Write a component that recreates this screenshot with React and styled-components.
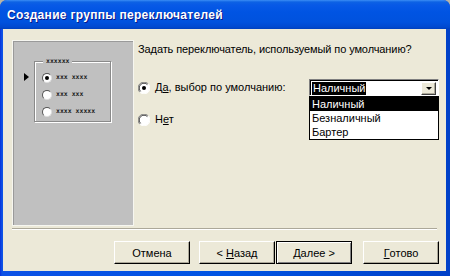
import React from "react";
import styled, { createGlobalStyle } from "styled-components";

const GlobalStyle = createGlobalStyle`
  html, body {
    margin: 0;
    padding: 0;
    background: #b8b4a6;
  }
  body {
    font-family: "Liberation Sans", Arial, sans-serif;
    font-size: 11px;
    color: #000;
  }
`;

const Window = styled.div`
  width: 450px;
  height: 276px;
  display: flex;
  flex-direction: column;
  overflow: hidden;
  border-radius: 7px 7px 0 0;
  background: #0842d6;
`;

const TitleBar = styled.div`
  height: 29px;
  flex: 0 0 29px;
  display: flex;
  align-items: center;
  padding-left: 7px;
  background: linear-gradient(
    to bottom,
    #3b8df5 0px,
    #0d62e4 2px,
    #0859e6 5px,
    #0054e3 12px,
    #0052de 22px,
    #0049d0 27px,
    #0040bd 29px
  );
  color: #fff;
  font-family: "Liberation Sans", Arial, sans-serif;
  font-weight: bold;
  font-size: 12px;
  letter-spacing: 0.3px;
  text-shadow: 1px 1px 0 #0a1a8a;
`;

const Frame = styled.div`
  flex: 1;
  display: flex;
  padding: 0 4px 5px 3px;
  background: linear-gradient(to right, #0831d9, #0d52e6 2px, #0054e3 50%, #0040c8);
`;

const Body = styled.div`
  flex: 1;
  display: flex;
  flex-direction: column;
  background: #ece9d8;
  padding: 11px 7px 0 9px;
`;

const Main = styled.div`
  display: flex;
  gap: 4px;
`;

const Preview = styled.div`
  width: 122px;
  height: 186px;
  box-sizing: border-box;
  background: #c0c0c0;
  border: 1px solid #f6f6f0;
  box-shadow: inset 1px 1px 0 #9a9a9a;
  display: flex;
  padding: 20px 0 0 11px;
`;

const Pointer = styled.div`
  width: 0;
  height: 0;
  margin-top: 12px;
  margin-right: 5px;
  border-top: 4px solid transparent;
  border-bottom: 4px solid transparent;
  border-left: 5px solid #000;
`;

const GroupBox = styled.div`
  position: relative;
  width: 77px;
  height: 61px;
  border: 1px solid #8a8a8a;
  box-shadow: 1px 1px 0 #fff, inset 1px 1px 0 #fff;
  padding: 11px 0 0 7px;
  box-sizing: border-box;
  display: flex;
  flex-direction: column;
  gap: 8px;
`;

const Dots = styled.span`
  font-family: "DejaVu Sans Mono", monospace;
  font-weight: bold;
  font-size: 6.5px;
  line-height: 9px;
  color: #202020;
  letter-spacing: 0;
`;

const GroupLegend = styled(Dots)`
  position: absolute;
  top: -5px;
  left: 8px;
  padding: 0 3px;
  background: #c0c0c0;
`;

const MiniRow = styled.div`
  display: flex;
  align-items: center;
  gap: 4px;
  height: 9px;
`;

const MiniDot = styled.span`
  width: 8px;
  height: 8px;
  border-radius: 50%;
  background: #fff;
  border: 1px solid #555;
  border-right-color: #ddd;
  border-bottom-color: #ddd;
  display: flex;
  align-items: center;
  justify-content: center;
  &::after {
    content: "";
    width: 4px;
    height: 4px;
    border-radius: 50%;
    background: ${(p) => (p.$on ? "#000" : "transparent")};
  }
`;

const Options = styled.div`
  flex: 1;
  display: flex;
  flex-direction: column;
`;

const Question = styled.div`
  margin-top: 3px;
  line-height: 13px;
  letter-spacing: -0.1px;
`;

const ChoiceRow = styled.div`
  display: flex;
  align-items: center;
  margin-top: ${(p) => p.$top}px;
  height: ${(p) => p.$h}px;
`;

const Label = styled.span`
  margin-left: 5px;
  width: ${(p) => (p.$w ? `${p.$w}px` : "auto")};
  line-height: 13px;
`;

const Key = styled.span`
  text-decoration: underline;
  text-underline-offset: 1px;
`;

const Combo = styled.div`
  position: relative;
  width: 130px;
  height: 17px;
  box-sizing: border-box;
  background: #fff;
  border: 1px solid #7f7f7f;
  border-right-color: #fff;
  border-bottom-color: #fff;
  box-shadow: inset 1px 1px 0 #000;
  display: flex;
  align-items: center;
  padding: 0 2px 0 2px;
`;

const ComboValue = styled.span`
  background: #000;
  color: #fff;
  line-height: 13px;
  padding: 0 1px;
  margin-top: 1px;
`;

const ComboButton = styled.span`
  margin-left: auto;
  width: 15px;
  height: 13px;
  margin-top: 1px;
  box-sizing: border-box;
  background: #ece9d8;
  border: 1px solid #fff;
  border-right-color: #404040;
  border-bottom-color: #404040;
  box-shadow: inset -1px -1px 0 #aca899;
  display: flex;
  align-items: center;
  justify-content: center;
  &::after {
    content: "";
    border-left: 3px solid transparent;
    border-right: 3px solid transparent;
    border-top: 3px solid #000;
  }
`;

const DropList = styled.ul`
  position: absolute;
  top: 16px;
  left: -1px;
  width: 130px;
  box-sizing: border-box;
  margin: 0;
  padding: 0;
  list-style: none;
  background: #fff;
  border: 1px solid #000;
  z-index: 5;
`;

const DropItem = styled.li`
  height: 14px;
  line-height: 14px;
  padding-left: 2px;
  background: ${(p) => (p.$active ? "#000" : "#fff")};
  color: ${(p) => (p.$active ? "#fff" : "#000")};
`;

const Separator = styled.div`
  margin-top: 2px;
  height: 0;
  border-top: 1px solid #aca899;
  border-bottom: 1px solid #fff;
  margin-right: 2px;
`;

const ButtonBar = styled.div`
  display: flex;
  justify-content: flex-end;
  margin-top: 11px;
`;

const Button = styled.div`
  width: 76px;
  height: 23px;
  box-sizing: border-box;
  margin-left: ${(p) => p.$gap}px;
  display: flex;
  align-items: center;
  justify-content: center;
  background: #ece9d8;
  border: 1px solid ${(p) => (p.$default ? "#000" : "#fff")};
  border-right-color: #000;
  border-bottom-color: #000;
  box-shadow: ${(p) =>
    p.$default
      ? "inset 1px 1px 0 #fff, inset -1px -1px 0 #808080"
      : "inset -1px -1px 0 #aca899"};
`;

function Radio({ on }) {
  return (
    <svg width="12" height="12" viewBox="0 0 12 12">
      <circle cx="6" cy="6" r="5.5" fill="#fff" />
      <path d="M1.8 10.2 A5.5 5.5 0 0 1 10.2 1.8" fill="none" stroke="#808080" strokeWidth="1" />
      <path d="M2.6 9.4 A4.4 4.4 0 0 1 9.4 2.6" fill="none" stroke="#404040" strokeWidth="1" />
      <path d="M10.2 1.8 A5.5 5.5 0 0 1 1.8 10.2" fill="none" stroke="#ffffff" strokeWidth="1" />
      {on && <circle cx="6" cy="6" r="2" fill="#000" />}
    </svg>
  );
}

const options = ["Наличный", "Безналичный", "Бартер"];

export default function App() {
  return (
    <>
      <GlobalStyle />
      <Window>
        <TitleBar>Создание группы переключателей</TitleBar>
        <Frame>
          <Body>
            <Main>
              <Preview>
                <Pointer />
                <GroupBox>
                  <GroupLegend>xxxxxx</GroupLegend>
                  <MiniRow>
                    <MiniDot $on />
                    <Dots>xxx xxxx</Dots>
                  </MiniRow>
                  <MiniRow>
                    <MiniDot />
                    <Dots>xxx xxx</Dots>
                  </MiniRow>
                  <MiniRow>
                    <MiniDot />
                    <Dots>xxxx xxxxx</Dots>
                  </MiniRow>
                </GroupBox>
              </Preview>
              <Options>
                <Question>Задать переключатель, используемый по умолчанию?</Question>
                <ChoiceRow $top={23} $h={17}>
                  <Radio on />
                  <Label $w={154}>
                    Д<Key>а</Key>, выбор по умолчанию:
                  </Label>
                  <Combo>
                    <ComboValue>Наличный</ComboValue>
                    <ComboButton />
                    <DropList>
                      {options.map((o, i) => (
                        <DropItem key={o} $active={i === 0}>
                          {o}
                        </DropItem>
                      ))}
                    </DropList>
                  </Combo>
                </ChoiceRow>
                <ChoiceRow $top={17} $h={13}>
                  <Radio />
                  <Label>
                    Н<Key>е</Key>т
                  </Label>
                </ChoiceRow>
              </Options>
            </Main>
            <Separator />
            <ButtonBar>
              <Button $gap={0}>Отмена</Button>
              <Button $gap={9}>
                &lt;&nbsp;<Key>Н</Key>азад
              </Button>
              <Button $gap={1} $default>
                <Key>Д</Key>алее&nbsp;&gt;
              </Button>
              <Button $gap={11}>
                <Key>Г</Key>отово
              </Button>
            </ButtonBar>
          </Body>
        </Frame>
      </Window>
    </>
  );
}
